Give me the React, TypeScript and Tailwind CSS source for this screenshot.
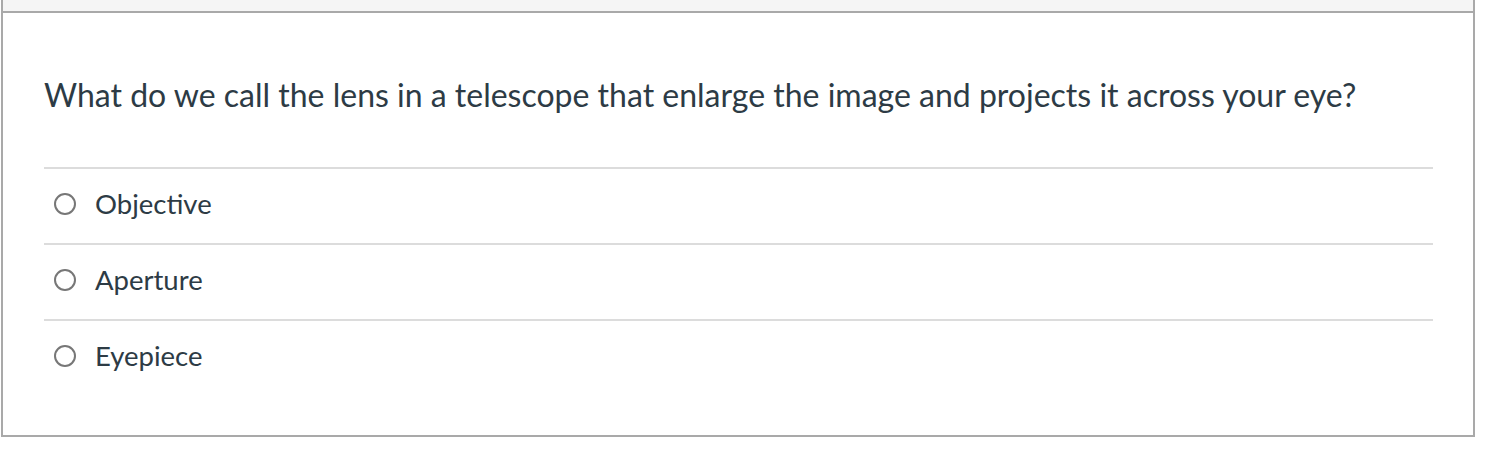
const answers = ["Objective", "Aperture", "Eyepiece"];

export default function App() {
	return (
		<div className="h-[454px] w-[1492px] bg-white font-['Lato',sans-serif] text-[#2d3b45]">
			<div className="ml-px w-[1474px] border-x-2 border-b-2 border-[#a9a9a9]">
				<div className="h-[13px] border-b-2 border-[#a9a9a9] bg-[#f5f5f5]" />
				<div className="pr-[40px] pb-[40px] pl-[41px]">
					<div className="pt-[62px] pb-[52px] text-[32px] leading-[40px]">
						What do we call the lens in a telescope that enlarge the image and projects it across your eye?
					</div>
					<ul>
						{answers.map((answer) => (
							<li
								key={answer}
								className="flex h-[76px] items-center gap-[19px] border-t-2 border-[#dcdcdc] pb-[4px] pl-[10px]"
							>
								<span className="size-[22px] rounded-full border-2 border-[#777]" />
								<span className="text-[27.5px]">{answer}</span>
							</li>
						))}
					</ul>
				</div>
			</div>
		</div>
	);
}
